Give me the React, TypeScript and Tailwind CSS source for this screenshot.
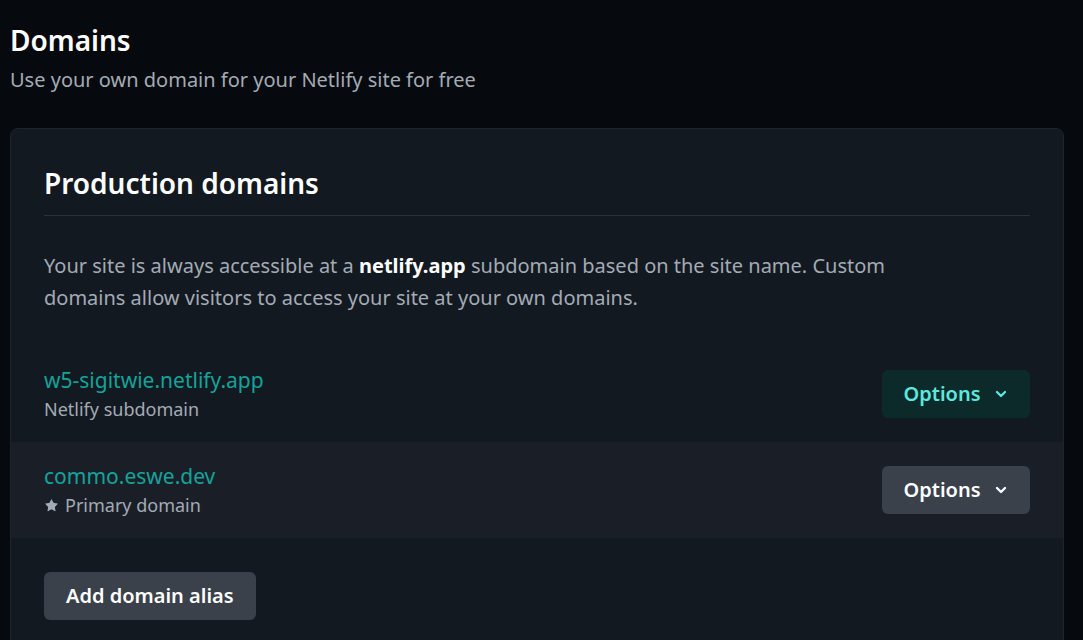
import { ChevronDown, Star } from "lucide-react"

const font = { fontFamily: '"Noto Sans", "Open Sans", sans-serif' }

function OptionsButton({ primary }: { primary?: boolean }) {
  return (
    <button
      className={
        primary
          ? "flex items-center gap-3 h-12 w-[148px] justify-center rounded-md bg-[#0c2a2a] text-[#5ce8de] text-[20px] font-semibold"
          : "flex items-center gap-3 h-12 w-[148px] justify-center rounded-md bg-[#3a414b] text-white text-[20px] font-semibold"
      }
    >
      Options
      <ChevronDown size={16} strokeWidth={3.5} />
    </button>
  )
}

export default function App() {
  return (
    <div style={font} className="min-h-screen bg-[#060a0e] pl-[10px] pr-[19px] pt-[22px]">
      <h1 className="text-[28px] leading-[36px] font-semibold text-white">Domains</h1>
      <p className="mt-[8px] text-[20px] leading-[28px] text-[#a3abb5]">
        Use your own domain for your Netlify site for free
      </p>

      <div className="mt-[34px] rounded-lg border border-[#1e242c] bg-[#131920]">
        <div className="px-[33px] pt-[34px]">
          <h2 className="text-[28px] leading-[40px] font-semibold text-white">Production domains</h2>
          <div className="mt-[12px] h-px bg-[#2a313a]" />
          <p className="mt-[34px] max-w-[880px] text-[20px] leading-[32px] text-[#a3abb5]">
            Your site is always accessible at a <strong className="font-bold text-white">netlify.app</strong> subdomain
            based on the site name. Custom domains allow visitors to access your site at your own domains.
          </p>
        </div>

        <div className="mt-[32px]">
          <div className="flex items-center justify-between h-[96px] px-[33px]">
            <div>
              <div className="text-[21px] leading-[30px] text-[#14a39b]">w5-sigitwie.netlify.app</div>
              <div className="text-[18px] leading-[28px] text-[#a3abb5]">Netlify subdomain</div>
            </div>
            <OptionsButton primary />
          </div>
          <div className="flex items-center justify-between h-[96px] px-[33px] bg-[#1a1f27]">
            <div>
              <div className="text-[21px] leading-[30px] text-[#14a39b]">commo.eswe.dev</div>
              <div className="flex items-center gap-[6px] text-[18px] leading-[28px] text-[#a3abb5]">
                <Star size={15} fill="#a3abb5" strokeWidth={0} />
                Primary domain
              </div>
            </div>
            <OptionsButton />
          </div>
        </div>

        <div className="px-[33px] pt-[34px] pb-[40px]">
          <button className="h-12 px-[22px] rounded-md bg-[#3a414b] text-white text-[20px] font-semibold">
            Add domain alias
          </button>
        </div>
      </div>
    </div>
  )
}
